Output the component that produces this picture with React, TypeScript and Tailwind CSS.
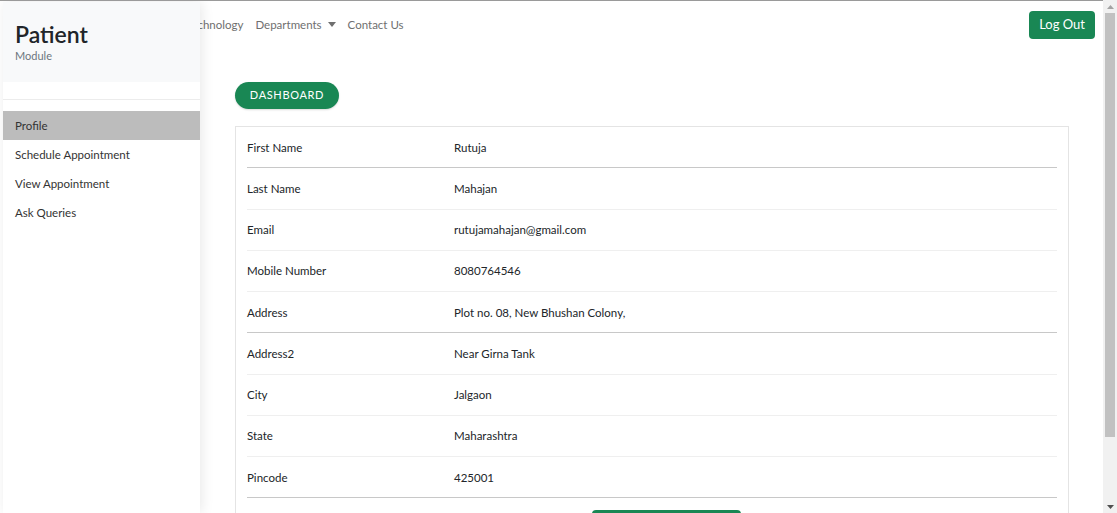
import React from "react";

const rows: { label: string; value: string; dark?: boolean }[] = [
  { label: "First Name", value: "Rutuja", dark: true },
  { label: "Last Name", value: "Mahajan" },
  { label: "Email", value: "rutujamahajan@gmail.com" },
  { label: "Mobile Number", value: "8080764546" },
  { label: "Address", value: "Plot no. 08, New Bhushan Colony,", dark: true },
  { label: "Address2", value: "Near Girna Tank" },
  { label: "City", value: "Jalgaon" },
  { label: "State", value: "Maharashtra" },
  { label: "Pincode", value: "425001", dark: true },
];

const menu = ["Profile", "Schedule Appointment", "View Appointment", "Ask Queries"];

export default function App() {
  return (
    <div
      className="flex h-[513px] w-[1117px] overflow-hidden bg-white text-[#212529]"
      style={{ fontFamily: "Lato, 'Noto Sans', sans-serif" }}
    >
      {/* main */}
      <div className="relative flex-1 overflow-hidden border-t border-[#9a9a9a]">
        {/* navbar */}
        <div className="flex h-[47px] items-center pr-[8px]">
          <div className="w-[186px]" />
          <div className="flex items-center gap-[12px] text-[11.5px] text-[#6f6f6f]">
            <span>Technology</span>
            <span className="flex items-center gap-[6px]">
              Departments
              <svg width="8" height="5" viewBox="0 0 8 5">
                <path d="M0 0 L8 0 L4 5 Z" fill="#6f6f6f" />
              </svg>
            </span>
            <span>Contact Us</span>
          </div>
          <button className="ml-auto h-[28px] rounded-[4px] bg-[#198754] px-[10px] text-[13px] text-white">
            Log Out
          </button>
        </div>

        {/* content */}
        <div className="ml-[235px] mr-[34px] flex flex-col items-start pt-[34px]">
          <button className="h-[27px] w-[104px] rounded-full bg-[#198754] text-[11px] tracking-[0.06em] text-white shadow-[0_1px_2px_rgba(0,0,0,0.15)]">
            DASHBOARD
          </button>
          <div className="mt-[17px] w-full border border-[#e4e4e4] px-[11px]">
            {rows.map((r) => (
              <div
                key={r.label}
                className={`flex h-[41.25px] items-center border-b text-[11.5px] ${
                  r.dark ? "border-[#c8c8c8]" : "border-[#efefef]"
                }`}
              >
                <div className="w-[207px]">{r.label}</div>
                <div>{r.value}</div>
              </div>
            ))}
            <div className="mt-[12px] flex">
              <div className="ml-[345px] h-[30px] w-[149px] rounded-t-[4px] bg-[#198754]" />
            </div>
          </div>
        </div>

        {/* offcanvas sidebar */}
        <div className="absolute bottom-0 left-[3px] top-[1px] w-[197px] bg-white shadow-[2px_0_12px_rgba(0,0,0,0.09)]">
          <div className="h-[80px] bg-[#f8f9fa] pl-[12px] pt-[18px]">
            <div className="text-[23px] font-semibold leading-[28px] text-[#212529]">Patient</div>
            <div className="mt-[1px] text-[11px] leading-[14px] text-[#6c757d]">Module</div>
          </div>
          <div className="mt-[17px] border-t border-[#ececec]" />
          <div className="mt-[11px]">
            {menu.map((m, i) => (
              <div
                key={m}
                className={`flex h-[29px] items-center pl-[12px] text-[11.5px] text-[#333] ${
                  i === 0 ? "bg-[#bcbcbc]" : ""
                }`}
              >
                {m}
              </div>
            ))}
          </div>
        </div>
      </div>

      {/* scrollbar */}
      <div className="flex w-[14px] flex-col items-center bg-[#f1f1f1]">
        <div className="flex h-[13px] items-center justify-center">
          <svg width="7" height="4" viewBox="0 0 7 4">
            <path d="M0 4 L7 4 L3.5 0 Z" fill="#a3a3a3" />
          </svg>
        </div>
        <div className="h-[424px] w-[10px] bg-[#c1c1c1]" />
        <div className="flex-1" />
        <div className="flex h-[13px] items-center justify-center">
          <svg width="7" height="4" viewBox="0 0 7 4">
            <path d="M0 0 L7 0 L3.5 4 Z" fill="#505050" />
          </svg>
        </div>
      </div>
    </div>
  );
}
